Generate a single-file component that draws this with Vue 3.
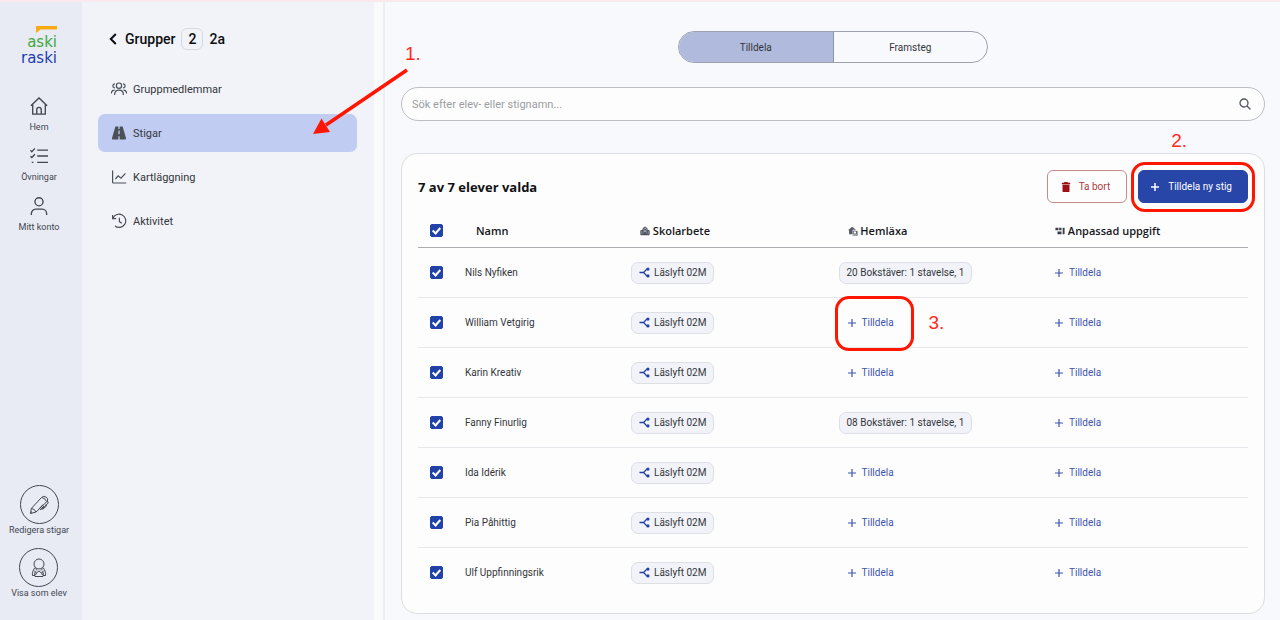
<template>
  <div class="app-shell">
    <nav class="rail" aria-label="Huvudmeny">
      <a href="#" class="logo" aria-label="aski raski">
        <svg class="logo-mark" viewBox="0 0 21 7" aria-hidden="true">
          <path d="M0 0h21v3.6H4.6L0 7z" fill="#fcaa12" />
        </svg>
        <span class="logo-aski">aski</span>
        <span class="logo-raski">raski</span>
      </a>

      <a href="#" class="rail-link">
        <svg class="rail-icon" viewBox="0 0 20 20">
          <path d="M1 9.800 10 1l9 8.800M3 8v11h14V8M7.500 19v-5a2.500 2.500 0 0 1 5 0v5" />
        </svg>
        <span>Hem</span>
      </a>
      <a href="#" class="rail-link">
        <svg class="rail-icon" viewBox="0 0 20 20">
          <path d="M8 3.500h12M8 10h12M8 17h12M.5 3.700l1.500 1.500L5.500 1.500M.5 10.200l1.500 1.500L5.500 8M2 17h1.800" />
        </svg>
        <span>Övningar</span>
      </a>
      <a href="#" class="rail-link">
        <svg class="rail-icon" viewBox="0 0 20 20">
          <circle cx="10" cy="5.300" r="4.500" />
          <path d="M1.500 20v-1.500a5 5 0 0 1 5-5h7a5 5 0 0 1 5 5V20" />
        </svg>
        <span>Mitt konto</span>
      </a>

      <div class="rail-bottom">
        <button type="button" class="round-link">
          <span class="round-icon">
            <svg viewBox="0 0 20 20">
              <path d="M1.500 18.500 2.300 13.500 12.500 2.500Q14.500.5 17 2t1.500 4L7 17zM2.300 13.500Q5.500 13.500 7 17M13 2.500q3 .5 4.500 4M1.500 18.500l1-2M18.500 6l.7 2-6.500 6.500M17 9.500l.5 1.500-4 3.500M15 11l-4 4M14 9.500l-4 4.500" />
            </svg>
          </span>
          <span>Redigera stigar</span>
        </button>
        <button type="button" class="round-link">
          <span class="round-icon">
            <svg viewBox="0 0 20 20">
              <circle cx="10" cy="6" r="5" />
              <path d="M6 9.500C4 12 3 15 3.500 17.500H6M14 9.500c2 2.500 3 5.500 2.500 8H14M6.500 13.500c-1 1.500-1 3.500-.5 5h8c.5-1.500.5-3.500-.5-5M5 12.500l2.500 2.500 2.500-2 2.500 2 2.500-2.500M6.500 10.500l1.500 2M13.500 10.500l-1.500 2M7.500 15l-1 2M12.500 15l1 2" />
            </svg>
          </span>
          <span>Visa som elev</span>
        </button>
      </div>
    </nav>

    <aside class="group-panel">
      <h1 class="group-title">
        <button type="button" class="back-button" aria-label="Tillbaka">
          <svg viewBox="0 0 8 12"><path d="M6.800 1 1.800 6l5 5" /></svg>
        </button>
        <span>Grupper</span>
        <span class="group-badge">2</span>
        <span>2a</span>
      </h1>
      <ul class="group-menu">
        <li v-for="item in menu" :key="item.label">
          <a href="#" class="menu-link" :class="{ 'menu-link--active': item.active }">
            <svg class="menu-icon" viewBox="0 0 20 20" :class="{ 'menu-icon--solid': item.active }">
              <path :d="item.icon" />
            </svg>
            <span>{{ item.label }}</span>
          </a>
          <template v-if="item.active">
            <svg class="arrow" viewBox="0 0 98 68" aria-hidden="true">
              <path d="M95 2 14 57" fill="none" stroke="#ff1500" stroke-width="3.500" />
              <path d="M1 66 9.500 50.500 18 64z" fill="#ff1500" />
            </svg>
            <span class="step step--menu">1.</span>
          </template>
        </li>
      </ul>
    </aside>

    <main class="content">
      <div class="tabs" role="tablist">
        <button
          v-for="tab in tabs"
          :key="tab"
          type="button"
          role="tab"
          class="tab"
          :class="{ 'tab--active': tab === activeTab }"
          :aria-selected="tab === activeTab"
          @click="activeTab = tab"
        >
          {{ tab }}
        </button>
      </div>

      <label class="search">
        <input v-model="query" type="text" placeholder="Sök efter elev- eller stignamn..." aria-label="Sök efter elev- eller stignamn" />
        <svg viewBox="0 0 12 12" aria-hidden="true">
          <circle cx="5" cy="5" r="4" />
          <path d="m8 8 3.500 3.500" />
        </svg>
      </label>

      <section class="card">
        <header class="card-header">
          <h2>{{ selectedCount }} av {{ students.length }} elever valda</h2>
          <button type="button" class="button button--danger">
            <svg viewBox="0 0 10 12" aria-hidden="true">
              <path d="M3.200 0h3.600l.6 1H10v1.600H0V1h2.600zM.8 3.400h8.400V11a1 1 0 0 1-1 1H1.800a1 1 0 0 1-1-1z" fill="currentColor" />
            </svg>
            Ta bort
          </button>
          <div class="marked">
            <button type="button" class="button button--primary">
              <svg viewBox="0 0 10 10" aria-hidden="true"><path d="M5 1v8M1 5h8" stroke="currentColor" stroke-width="1.500" /></svg>
              Tilldela ny stig
            </button>
            <span class="mark mark--button"></span>
            <span class="step step--button">2.</span>
          </div>
        </header>

        <table class="students">
          <colgroup>
            <col class="col-check" />
            <col class="col-name" />
            <col class="col-path" />
            <col class="col-path" />
            <col />
          </colgroup>
          <thead>
            <tr>
              <th class="check-cell"><input v-model="allSelected" type="checkbox" class="checkbox" aria-label="Välj alla" /></th>
              <th class="name-head">Namn</th>
              <th class="path-head">
                <svg viewBox="0 0 12 12" aria-hidden="true">
                  <path d="M1 10.500V5.500h2.500V3L6 1.200 8.500 3v2.500H11v5z" fill="#9a9eab" stroke="#30343f" />
                  <path d="M5 10.500V8h2v2.500M3.500 5.500v5M8.500 5.500v5M5 4.500h2" fill="none" stroke="#30343f" />
                </svg>
                Skolarbete
              </th>
              <th class="path-head">
                <svg viewBox="0 0 12 12" aria-hidden="true">
                  <path d="M0 5.200 5 .8l4.500 3.700H5.500V10H1.300V5.200z" fill="#555966" />
                  <path d="M6.500 6h3.700v3.500H6.500zM5.500 11h6M11 6v5" fill="none" stroke="#555966" />
                </svg>
                Hemläxa
              </th>
              <th class="path-head">
                <svg viewBox="0 0 12 12" aria-hidden="true">
                  <path d="M.500 2h3.600v3H.5zM5 2h2.800v3H5zM3 6.500h4.800V10H3zM9.200 2H11.500v8H9.200z" fill="#3c3f4b" />
                </svg>
                Anpassad uppgift
              </th>
            </tr>
          </thead>
          <tbody>
            <tr v-for="student in students" :key="student.name">
              <td class="check-cell">
                <input v-model="student.selected" type="checkbox" class="checkbox" :aria-label="student.name" />
              </td>
              <td>{{ student.name }}</td>
              <td>
                <button type="button" class="chip">
                  <svg viewBox="0 0 12 12" aria-hidden="true">
                    <path d="M.5 6H5M9.500 2.300H8.500L5 6l3.500 3.700h1" fill="none" stroke="currentColor" stroke-width="1.500" />
                    <circle cx="9.800" cy="2.300" r="1.700" fill="currentColor" />
                    <circle cx="9.800" cy="9.700" r="1.700" fill="currentColor" />
                  </svg>
                  Läslyft 02M
                </button>
              </td>
              <td>
                <button v-if="student.homework" type="button" class="chip">{{ student.homework }}</button>
                <div v-else class="marked">
                  <button type="button" class="assign">
                    <svg viewBox="0 0 10 10" aria-hidden="true"><path d="M5 1v8M1 5h8" stroke="currentColor" stroke-width="1.200" /></svg>
                    Tilldela
                  </button>
                  <template v-if="student.marked">
                    <span class="mark mark--assign"></span>
                    <span class="step step--assign">3.</span>
                  </template>
                </div>
              </td>
              <td>
                <button type="button" class="assign">
                  <svg viewBox="0 0 10 10" aria-hidden="true"><path d="M5 1v8M1 5h8" stroke="currentColor" stroke-width="1.200" /></svg>
                  Tilldela
                </button>
              </td>
            </tr>
          </tbody>
        </table>
      </section>
    </main>
  </div>
</template>

<script setup>
import { computed, ref } from 'vue'

const tabs = ['Tilldela', 'Framsteg']
const activeTab = ref('Tilldela')
const query = ref('')

const menu = [
  {
    label: 'Gruppmedlemmar',
    icon: 'M10 2.500a3.300 3.300 0 1 0 0 6.600 3.300 3.300 0 0 0 0-6.600M4.500 17.500c0-8 11-8 11 0M5 3.500a2.600 2.600 0 1 0 0 5.200M15 3.500a2.600 2.600 0 1 1 0 5.200M.5 15.500c0-2.500 1.500-4 4-4M19.500 15.500c0-2.500-1.500-4-4-4'
  },
  {
    label: 'Stigar',
    active: true,
    icon: 'M5.500 2h3.700v3h1.600V2h3.700l4.300 14.500q.3 1.500-1.300 1.500h-6.700v-4H9.200v4H2.500q-1.600 0-1.300-1.500zM9.200 7v4.500h1.600V7z'
  },
  {
    label: 'Kartläggning',
    icon: 'M2 2v14.500q0 1 1 1h16M5.500 12.500l3.500-4 3.500 3L18 5.500'
  },
  {
    label: 'Aktivitet',
    icon: 'M2 2.500V7h4.500M2.500 6.500a8.300 8.300 0 1 1 2.500 9.800M10.500 6v4.700l3 2'
  }
]

const students = ref([
  { name: 'Nils Nyfiken', homework: '20 Bokstäver: 1 stavelse, 1', selected: true },
  { name: 'William Vetgirig', selected: true, marked: true },
  { name: 'Karin Kreativ', selected: true },
  { name: 'Fanny Finurlig', homework: '08 Bokstäver: 1 stavelse, 1', selected: true },
  { name: 'Ida Idérik', selected: true },
  { name: 'Pia Påhittig', selected: true },
  { name: 'Ulf Uppfinningsrik', selected: true }
])

const selectedCount = computed(() => students.value.filter((s) => s.selected).length)

const allSelected = computed({
  get: () => selectedCount.value === students.value.length,
  set: (value) => students.value.forEach((s) => { s.selected = value })
})
</script>

<style>
body {
  margin: 0;
}
</style>

<style scoped>
.app-shell {
  display: flex;
  box-sizing: border-box;
  min-height: 100vh;
  border-top: 2px solid #fbe9ee;
  background: #f8f9fc;
  font-family: Roboto, "Liberation Sans", sans-serif;
  font-size: 10px;
  color: #33363b;
}

button {
  font: inherit;
  color: inherit;
  cursor: pointer;
}

svg {
  flex: none;
}

a {
  color: inherit;
  text-decoration: none;
}

/* Rail */
.rail {
  display: flex;
  flex: none;
  flex-direction: column;
  align-items: center;
  gap: 14px;
  box-sizing: border-box;
  width: 82px;
  padding: 24px 4px 21px 0;
  background: #e8ebf4;
  font-size: 9px;
  line-height: 12px;
  color: #43474f;
}

.logo {
  display: flex;
  flex-direction: column;
  align-items: flex-end;
  margin-bottom: 17px;
  font-family: "DejaVu Sans", sans-serif;
  font-size: 15px;
  line-height: 16px;
}

.logo-mark {
  width: 21px;
  height: 7px;
  margin-bottom: 1px;
}

.logo-aski {
  color: #43a83f;
}

.logo-raski {
  color: #1d3db0;
}

.rail-link {
  display: flex;
  flex-direction: column;
  align-items: center;
  gap: 6px;
}

.rail-icon {
  width: 18px;
  height: 18px;
  fill: none;
  stroke: #43474f;
  stroke-width: 1.5;
}

.rail-bottom {
  display: flex;
  flex-direction: column;
  align-items: center;
  gap: 12px;
  margin-top: auto;
}

.round-link {
  display: flex;
  flex-direction: column;
  align-items: center;
  padding: 0;
  border: 0;
  background: none;
  white-space: nowrap;
}

.round-icon {
  display: grid;
  place-items: center;
  width: 37px;
  height: 37px;
  border: 1px solid #43474f;
  border-radius: 50%;
}

.round-icon svg {
  width: 20px;
  height: 20px;
  fill: none;
  stroke: #43474f;
}

/* Group panel */
.group-panel {
  flex: none;
  box-sizing: border-box;
  width: 292px;
  padding: 25px 17px 24px 16px;
  background: #f1f3f8;
}

.group-title {
  display: flex;
  align-items: center;
  gap: 6px;
  margin: 0 0 19px;
  padding-left: 9px;
  font-size: 14px;
  font-weight: 500;
  line-height: 24px;
  color: #0c0d10;
}

.back-button {
  display: flex;
  padding: 2px;
  border: 0;
  background: none;
}

.back-button svg {
  width: 8px;
  height: 12px;
  fill: none;
  stroke: #0c0d10;
  stroke-width: 2;
}

.group-badge {
  box-sizing: border-box;
  width: 22px;
  height: 22px;
  border: 1px solid #d5d8de;
  border-radius: 6px;
  line-height: 20px;
  text-align: center;
}

.group-menu {
  display: grid;
  gap: 6px;
  margin: 0;
  padding: 0;
  list-style: none;
}

.group-menu li {
  position: relative;
}

.menu-link {
  display: flex;
  align-items: center;
  gap: 6px;
  height: 38px;
  padding: 0 13px;
  border-radius: 7px;
  font-size: 11px;
}

.menu-link--active {
  background: #c0ccf2;
}

.menu-icon {
  width: 16px;
  height: 16px;
  fill: none;
  stroke: #4b4f58;
  stroke-width: 1.5;
}

.menu-icon--solid {
  fill: #4b4f58;
  stroke: none;
}

/* Guide marks */
.arrow {
  position: absolute;
  z-index: 2;
  left: 214px;
  bottom: 16px;
  width: 98px;
  height: 68px;
}

.marked {
  position: relative;
  width: max-content;
}

.step {
  position: absolute;
  z-index: 2;
  font-family: "Liberation Sans", sans-serif;
  font-size: 19px;
  line-height: 20px;
  color: #ff2a1c;
}

.step--menu {
  left: 307px;
  bottom: 88px;
}

.step--button {
  left: 33px;
  bottom: 52px;
}

.step--assign {
  left: 90px;
  top: 1px;
}

.mark {
  position: absolute;
  border: 3px solid #ff1500;
  border-radius: 14px;
  pointer-events: none;
}

.mark--button {
  inset: -8px -7px -9px;
}

.mark--assign {
  inset: -16px -12px -17px -4px;
}

/* Content */
.content {
  display: flex;
  flex: 1;
  flex-direction: column;
  min-width: 0;
  margin-left: 9px;
  padding: 29px 15px 5px 16px;
  border-left: 2px solid #eceef2;
  box-shadow: -9px 0 #fafafc;
}

.tabs {
  display: flex;
  align-self: center;
  box-sizing: border-box;
  width: 310px;
  height: 32px;
  border: 1px solid #9da1ab;
  border-radius: 16px;
  overflow: hidden;
}

.tab {
  flex: 1;
  padding: 0;
  border: 0;
  background: none;
}

.tab--active {
  border-right: 1px solid #8c95b5;
  background: #b0badd;
}

.search {
  display: flex;
  align-items: center;
  box-sizing: border-box;
  height: 34px;
  margin-top: 24px;
  padding: 0 13px 0 10px;
  border: 1px solid #bcbec3;
  border-radius: 17px;
  background: #fdfdfd;
}

.search input {
  flex: 1;
  min-width: 0;
  padding: 0;
  border: 0;
  outline: none;
  background: none;
  font: inherit;
  font-size: 11px;
}

.search input::placeholder {
  color: #9b9da1;
}

.search svg {
  width: 12px;
  height: 12px;
  fill: none;
  stroke: #50545b;
  stroke-width: 1.3;
}

.card {
  margin-top: 32px;
  padding: 16px;
  border: 1px solid #dcdee2;
  border-radius: 16px;
  background: #fdfdfd;
}

.card-header {
  display: flex;
  align-items: center;
  gap: 11px;
}

.card-header h2 {
  flex: 1;
  margin: 0;
  font-family: "Open Sans", sans-serif;
  font-size: 13px;
  font-weight: 700;
  color: #101114;
}

.button {
  display: flex;
  align-items: center;
  gap: 8px;
  box-sizing: border-box;
  height: 33px;
  padding: 0 16px 0 13px;
  border: 1px solid;
  border-radius: 6px;
}

.button svg {
  width: 10px;
  height: 10px;
}

.button--danger {
  border-color: #c98a8e;
  background: none;
  color: #ad3b40;
}

.button--danger svg {
  color: #9c0f17;
}

.button--primary {
  padding: 0 15px 0 11px;
  border-color: #2746a8;
  background: #2746a8;
  color: #fff;
}

/* Students */
.students {
  width: 100%;
  margin-top: 11px;
  border-collapse: collapse;
  table-layout: fixed;
}

.col-check {
  width: 47px;
}

.col-name {
  width: 20%;
}

.col-path {
  width: 25%;
}

.students th {
  height: 33px;
  padding: 0;
  border-bottom: 1px solid #a9abaf;
  font-family: "Open Sans", sans-serif;
  font-size: 11px;
  font-weight: 600;
  text-align: left;
  color: #15171b;
}

.students td {
  height: 49px;
  padding: 0;
  border-bottom: 1px solid #e6e7ea;
}

.students tr:last-child td {
  border-bottom: 0;
}

.students .check-cell {
  padding-left: 12px;
}

.students .name-head {
  padding-left: 11px;
}

.students .path-head {
  padding-left: 9px;
}

.path-head svg {
  width: 10px;
  height: 10px;
  vertical-align: -1px;
}

.checkbox {
  display: grid;
  place-items: center;
  appearance: none;
  width: 13px;
  height: 13px;
  margin: 0;
  border: 1px solid #2142a8;
  border-radius: 2px;
  background: #fff;
}

.checkbox:checked {
  background: #2142a8;
}

.checkbox:checked::after {
  content: "";
  width: 3px;
  height: 6px;
  margin-bottom: 2px;
  border: solid #fff;
  border-width: 0 2px 2px 0;
  transform: rotate(42deg);
}

.chip {
  display: flex;
  align-items: center;
  gap: 4px;
  box-sizing: border-box;
  height: 22px;
  padding: 0 7px;
  border: 1px solid #dddfe7;
  border-radius: 7px;
  background: #f2f3f9;
  white-space: nowrap;
}

.chip svg {
  width: 11px;
  height: 11px;
  color: #2142a8;
}

.assign {
  display: flex;
  align-items: center;
  gap: 5px;
  height: 22px;
  padding: 0 8px;
  border: 0;
  background: none;
  color: #3d55ae;
}

.assign svg {
  width: 10px;
  height: 10px;
}
</style>
